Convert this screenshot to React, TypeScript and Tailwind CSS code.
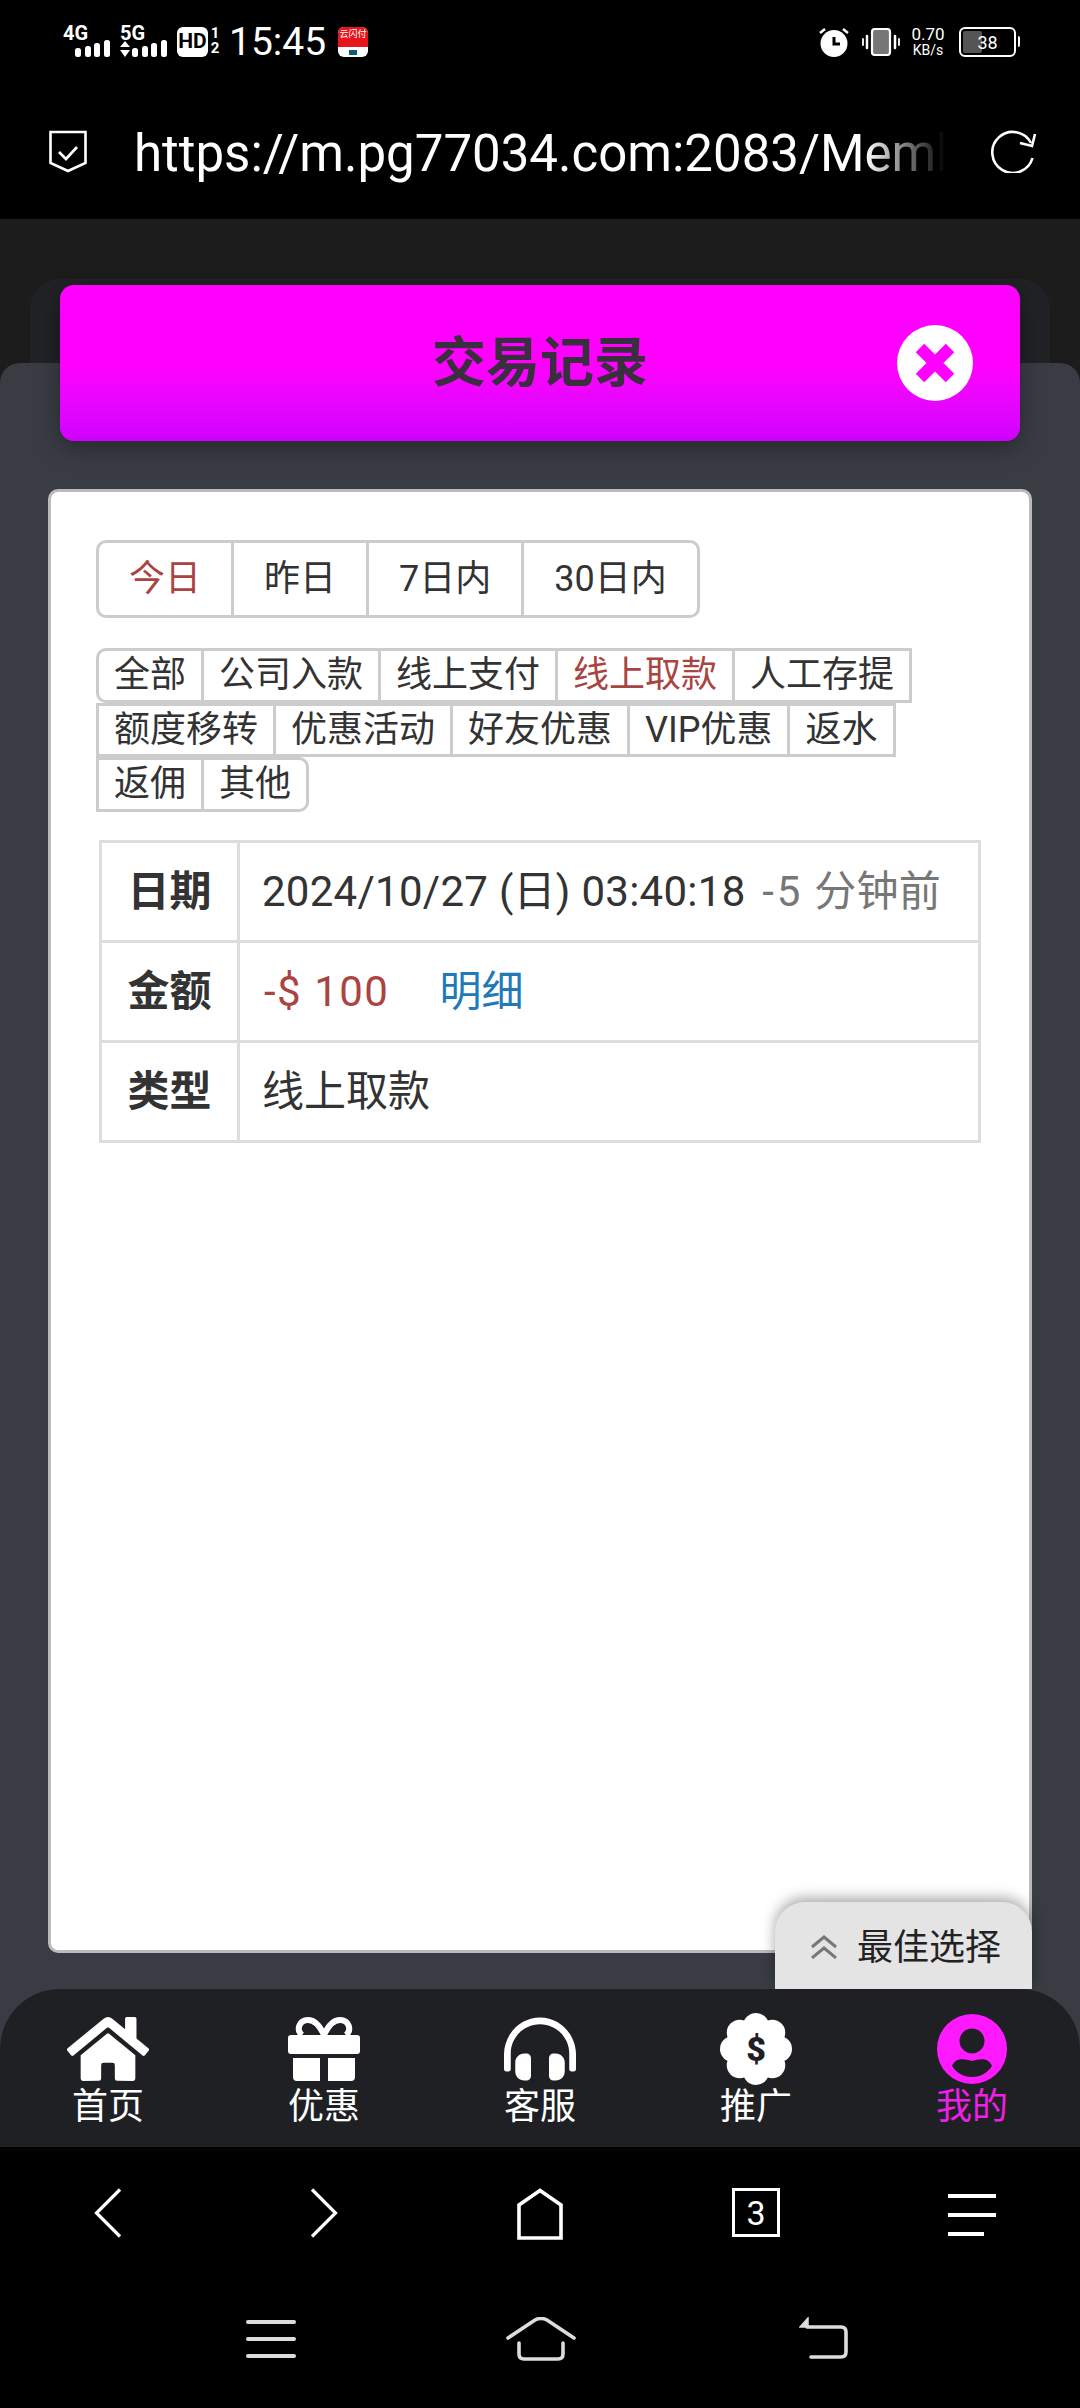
import { FaHome, FaHeadphonesAlt } from "react-icons/fa";

const ranges = [
  { label: "今日", active: true },
  { label: "昨日" },
  { label: "7日内" },
  { label: "30日内" },
];

const tagRows = [
  ["全部", "公司入款", "线上支付", "线上取款", "人工存提"],
  ["额度移转", "优惠活动", "好友优惠", "VIP优惠", "返水"],
  ["返佣", "其他"],
];

function SignalBars() {
  return (
    <svg width="35" height="17" viewBox="0 0 35 17" fill="#fff">
      <rect x="0" y="8" width="6" height="9" rx="2.5" />
      <rect x="10" y="6" width="6" height="11" rx="2.5" />
      <rect x="19" y="3" width="6" height="14" rx="2.5" />
      <rect x="29" y="0" width="6" height="17" rx="2.5" />
    </svg>
  );
}

function StatusBar() {
  return (
    <div className="h-[84px] pl-[63px] pr-[64px] pt-[26px] flex items-start text-white">
      <div className="w-[47px] flex flex-col">
        <span className="text-[20px] leading-[14px] font-bold">4G</span>
        <div className="self-end">
          <SignalBars />
        </div>
      </div>
      <div className="ml-[10px] w-[47px] flex flex-col">
        <span className="text-[20px] leading-[14px] font-bold">5G</span>
        <div className="flex justify-between items-end">
          <svg width="10" height="17" viewBox="0 0 10 17" fill="#fff">
            <path d="M5 1 L10 7 H0 Z M0 10 H10 L5 17 Z" />
          </svg>
          <SignalBars />
        </div>
      </div>
      <div className="ml-[10px] mt-[1px] w-[31px] h-[30px] bg-white rounded-[6px] flex items-center justify-center text-black text-[21px] font-bold">
        HD
      </div>
      <div className="ml-[2px] w-[10px] flex flex-col items-center text-[15px] leading-[15px] font-bold">
        <span>1</span>
        <span>2</span>
      </div>
      <span className="ml-[9px] -mt-[3px] text-[39px] leading-[38px]">15:45</span>
      <div className="ml-[12px] mt-[1px] w-[30px] h-[30px] rounded-[6px] overflow-hidden bg-white flex flex-col items-center">
        <div className="w-full h-[20px] bg-[#e8141c] text-[9px] leading-[14px] text-center">云闪付</div>
        <div className="mt-[3px] w-[8px] h-[5px] bg-[#0d5c7a]" />
      </div>

      <svg className="ml-auto mt-[1px]" width="30" height="30" viewBox="0 0 30 30">
        <circle cx="15" cy="16.5" r="13.5" fill="#fff" />
        <path d="M15 10 V17 H21" stroke="#000" strokeWidth="3" fill="none" />
        <path d="M1 6 L6 2 M29 6 L24 2" stroke="#fff" strokeWidth="2.5" />
      </svg>
      <svg className="ml-[13px] mt-[2px]" width="38" height="28" viewBox="0 0 38 28">
        <rect x="10" y="1" width="18" height="26" rx="3" fill="#777" stroke="#fff" strokeWidth="2.2" />
        <path d="M5 8 V20 M33 8 V20" stroke="#fff" strokeWidth="2.5" strokeLinecap="round" />
        <path d="M1 11 V17 M37 11 V17" stroke="#fff" strokeWidth="1.8" strokeLinecap="round" />
      </svg>
      <div className="ml-[9px] w-[38px] flex flex-col items-center">
        <span className="text-[17px] leading-[17px]">0.70</span>
        <span className="text-[14px] leading-[14px]">KB/s</span>
      </div>
      <div className="ml-[12px] mt-[1px] relative w-[57px] h-[30px] border-[2.5px] border-white rounded-[6px] flex items-center justify-center text-[18px]">
        <div className="absolute left-[2px] top-[2px] bottom-[2px] w-[19px] bg-[#555] rounded-[2px]" />
        <span className="relative">38</span>
        <div className="absolute -right-[6px] top-[7px] w-[2px] h-[11px] bg-white rounded-r" />
      </div>
    </div>
  );
}

function AddressBar() {
  return (
    <div className="h-[135px] flex items-center text-white">
      <svg className="ml-[49px] shrink-0" width="38" height="44" viewBox="0 0 38 44" fill="none" stroke="#fff">
        <path d="M1.5 2 H36.5 V33 L19 41 L1.5 33 Z" strokeWidth="2.6" />
        <path d="M10 22 L17 29 L28 17" strokeWidth="2.6" />
      </svg>
      <div className="relative mt-[4px] ml-[47px] w-[811px] overflow-hidden whitespace-nowrap text-[51px] leading-[64px]">
        https://m.pg77034.com:2083/Memb
        <div className="absolute right-0 top-0 bottom-0 w-[80px] bg-gradient-to-r from-transparent to-black" />
      </div>
      <svg className="ml-[46px] -mt-[2px] shrink-0" width="46" height="44" viewBox="0 0 46 44" fill="none" stroke="#fff" strokeWidth="2.6">
        <path d="M40 14 A20.5 20.5 0 1 0 41.5 29" />
        <path d="M44 5 L41 17 L29 14" />
      </svg>
    </div>
  );
}

function RecordCard() {
  return (
    <div className="mx-[48px] h-[1464px] bg-white border-[3px] border-[#bbbbbb] rounded-[10px] pt-[48px] pl-[45px] pr-[45px]">
      <div className="flex">
        {ranges.map((r, i) => (
          <div
            key={r.label}
            className={`h-[78px] px-[30px] border-[3px] border-[#cccccc] flex items-center text-[36px] ${
              i > 0 ? "-ml-[3px]" : ""
            } ${i === 0 ? "rounded-l-[10px]" : ""} ${i === ranges.length - 1 ? "rounded-r-[10px]" : ""} ${
              r.active ? "text-[#a94442]" : "text-[#333333]"
            }`}
          >
            {r.label}
          </div>
        ))}
      </div>

      <div className="mt-[30px] flex flex-col">
        {tagRows.map((row, ri) => (
          <div key={ri} className="flex">
            {row.map((t, i) => (
              <div
                key={t}
                className={`h-[54.5px] px-[15px] border-[3px] border-[#cccccc] flex items-center text-[36px] ${
                  i > 0 ? "-ml-[3px]" : ""
                } ${ri === 0 && i === 0 ? "rounded-l-[10px]" : ""} ${
                  ri === 2 && i === row.length - 1 ? "rounded-r-[10px]" : ""
                } ${t === "线上取款" ? "text-[#a94442]" : "text-[#333333]"}`}
              >
                {t}
              </div>
            ))}
          </div>
        ))}
      </div>

      <table className="mt-[28px] ml-[3px] w-[882px] border-collapse text-[42px] text-[#333333]">
        <tbody>
          <tr className="h-[100px]">
            <th className="w-[138px] border-[3px] border-[#dddddd] font-bold text-center">日期</th>
            <td className="border-[3px] border-[#dddddd] pl-[22px] tracking-[0.27px]">
              2024/10/27 (日) 03:40:18{" "}
              <span className="ml-[6px] text-[#777777]">
                <span className="tracking-[3px]">-5</span> 分钟前
              </span>
            </td>
          </tr>
          <tr className="h-[100px]">
            <th className="border-[3px] border-[#dddddd] font-bold text-center">金额</th>
            <td className="border-[3px] border-[#dddddd] pl-[24px]">
              <span className="text-[#a94442] tracking-[1.5px]">-$ 100</span>
              <span className="ml-[50px] text-[#1f7ab8]">明细</span>
            </td>
          </tr>
          <tr className="h-[100px]">
            <th className="border-[3px] border-[#dddddd] font-bold text-center">类型</th>
            <td className="border-[3px] border-[#dddddd] pl-[22px]">线上取款</td>
          </tr>
        </tbody>
      </table>
    </div>
  );
}

function GiftIcon() {
  return (
    <svg width="72" height="64" viewBox="0 0 72 64" fill="#fff">
      <path
        d="M36 18 C31 7 26 3 20 3 C11 3 8 13 14 18 M36 18 C41 7 46 3 52 3 C61 3 64 13 58 18"
        fill="none"
        stroke="#fff"
        strokeWidth="6"
      />
      <rect x="0" y="18" width="72" height="19" rx="3" />
      <path d="M5 41 H32 V64 H9 Q5 64 5 60 Z M40 41 H67 V60 Q67 64 63 64 H40 Z" />
    </svg>
  );
}

function BadgeIcon() {
  const lobes = [0, 45, 90, 135, 180, 225, 270, 315];
  return (
    <svg width="72" height="72" viewBox="0 0 72 72" fill="#fff">
      <circle cx="36" cy="36" r="27" />
      {lobes.map((a) => (
        <circle
          key={a}
          cx={36 + 23 * Math.cos((a * Math.PI) / 180)}
          cy={36 + 23 * Math.sin((a * Math.PI) / 180)}
          r="13"
        />
      ))}
      <text x="36" y="48" textAnchor="middle" fontSize="34" fontWeight="900" fill="#1f2024">
        $
      </text>
    </svg>
  );
}

function UserIcon() {
  return (
    <svg width="70" height="70" viewBox="0 0 70 70">
      <circle cx="35" cy="35" r="35" fill="#ff19ff" />
      <circle cx="35" cy="27" r="12.5" fill="#1f2024" />
      <path
        d="M15 52 C18 44 26 44 35 47 C44 44 52 44 55 52 C50 60 42 63 35 63 C28 63 20 60 15 52 Z"
        fill="#1f2024"
      />
    </svg>
  );
}

const navItems = [
  { label: "首页", icon: <FaHome size={82} color="#fff" className="shrink-0" /> },
  { label: "优惠", icon: <GiftIcon /> },
  { label: "客服", icon: <FaHeadphonesAlt size={72} color="#fff" className="shrink-0" /> },
  { label: "推广", icon: <BadgeIcon /> },
  { label: "我的", icon: <UserIcon />, active: true },
];

function BottomNav() {
  return (
    <div className="relative -mt-[60px] h-[158px] pt-[28px] bg-[#1f2024] rounded-t-[60px] grid grid-cols-5">
      {navItems.map((n) => (
        <div key={n.label} className="flex flex-col items-center">
          <div className="h-[64px] flex items-center justify-center">{n.icon}</div>
          <span className={`mt-[3px] text-[36px] leading-[46px] ${n.active ? "text-[#f01fe8]" : "text-white"}`}>{n.label}</span>
        </div>
      ))}
    </div>
  );
}

function BrowserBars() {
  return (
    <div className="flex-1 bg-black">
      <div className="h-[134px] pt-[41px] grid grid-cols-5 justify-items-center items-start">
        <svg width="28" height="50" viewBox="0 0 28 50" fill="none" stroke="#fff" strokeWidth="3.2">
          <path d="M26 1.5 L2.5 25 L26 48.5" />
        </svg>
        <svg width="28" height="50" viewBox="0 0 28 50" fill="none" stroke="#fff" strokeWidth="3.2">
          <path d="M2 1.5 L25.5 25 L2 48.5" />
        </svg>
        <svg width="46" height="52" viewBox="0 0 46 52" fill="none" stroke="#fff" strokeWidth="3.6">
          <path d="M2 50 V17 L23 2.5 L44 17 V50 Z" />
        </svg>
        <div className="w-[48px] h-[49px] border-[3.5px] border-white flex items-center justify-center text-white text-[34px] leading-none">
          3
        </div>
        <div className="w-[48px] pt-[6px] flex flex-col gap-[15px]">
          <div className="h-[4px] bg-white" />
          <div className="h-[4px] bg-white" />
          <div className="h-[4px] w-[36px] bg-white" />
        </div>
      </div>
      <div className="pl-[246px] flex items-start">
        <div className="mt-[39px] w-[50px] flex flex-col gap-[13px]">
          <div className="h-[4px] rounded bg-[#dddddd]" />
          <div className="h-[4px] rounded bg-[#dddddd]" />
          <div className="h-[4px] rounded bg-[#dddddd]" />
        </div>
        <svg className="ml-[210px] mt-[36px]" width="70" height="44" viewBox="0 0 70 44" fill="none" stroke="#dddddd" strokeWidth="3.6" strokeLinecap="round">
          <path d="M2 21 L29 3 Q35 0 41 3 L68 21" />
          <path d="M13 26 V37 Q13 42 18 42 H52 Q57 42 57 37 V26" />
        </svg>
        <svg className="ml-[223px] mt-[36px]" width="50" height="42" viewBox="0 0 50 42" fill="none" stroke="#dddddd" strokeWidth="3.6" strokeLinecap="round">
          <path d="M1 10 L9 1 V10 Z" fill="#dddddd" strokeWidth="1.5" />
          <path d="M8 10 H42 Q47 10 47 15 V35 Q47 40 42 40 H12" />
        </svg>
      </div>
    </div>
  );
}

export default function App() {
  return (
    <div className="w-[1080px] h-[2408px] overflow-hidden flex flex-col bg-black font-[Roboto,'Noto_Sans_CJK_SC',sans-serif]">
      <StatusBar />
      <AddressBar />

      <div className="bg-[#1c1c1c] pt-[60px]">
        <div className="relative z-10 mx-[30px] h-[84px] px-[30px] pt-[6px] bg-[#212226] rounded-t-[30px]">
          <div className="h-[156px] rounded-[14px] bg-gradient-to-b from-[#ff00ff] via-[#ff00ff] to-[#d000ff] shadow-[0_6px_24px_rgba(0,0,0,0.35)] flex items-center justify-center relative">
            <span className="text-[54px] font-bold text-[#3a2f3f]">交易记录</span>
            <div className="absolute right-[47px] top-[40px] w-[76px] h-[76px] rounded-full bg-white flex items-center justify-center">
              <svg width="42" height="42" viewBox="0 0 42 42" stroke="#ff00ff" strokeWidth="12">
                <path d="M6 6 L36 36 M36 6 L6 36" />
              </svg>
            </div>
          </div>
        </div>

        <div className="relative bg-[#3a3c44] rounded-t-[20px] pt-[126px] pb-[96px]">
          <RecordCard />
          <div className="absolute right-[48px] bottom-[60px] w-[257px] h-[87px] pl-[36px] rounded-t-[30px] bg-[#e4e4e4] shadow-[0_-4px_14px_rgba(0,0,0,0.35)] flex items-start pt-[25px]">
            <svg className="mt-[8px]" width="26" height="24" viewBox="0 0 26 24" fill="none" stroke="#777777" strokeWidth="3">
              <path d="M1 12 L13 2 L25 12 M1 23 L13 13 L25 23" />
            </svg>
            <span className="ml-[20px] text-[36px] leading-[42px] text-[#222222]">最佳选择</span>
          </div>
        </div>

        <BottomNav />
      </div>

      <BrowserBars />
    </div>
  );
}
